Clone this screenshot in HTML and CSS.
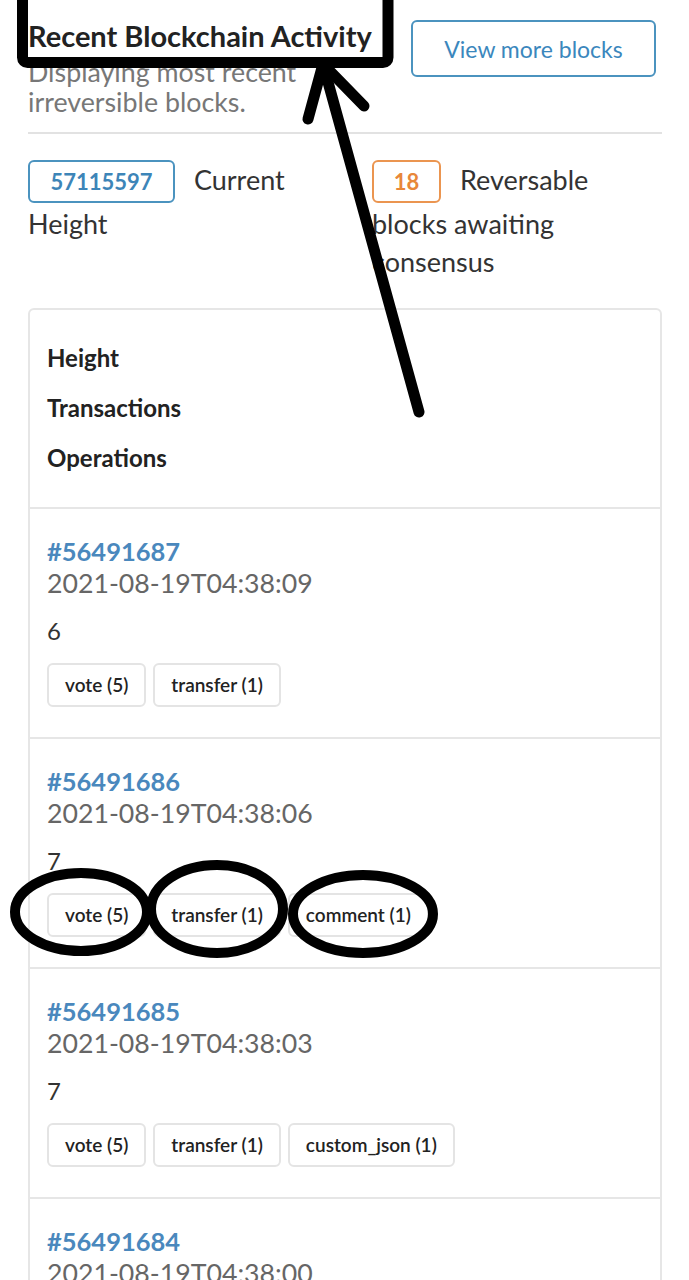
FILE: index.html
```html
<!DOCTYPE html>
<html lang="en">
<head>
<meta charset="utf-8">
<title>Recent Blockchain Activity</title>
<link rel="stylesheet" href="styles.css">
</head>
<body>
<main class="page">
  <header class="head">
    <div class="head-text">
      <h1 class="title">Recent Blockchain Activity</h1>
      <p class="subtitle">Displaying most recent irreversible blocks.</p>
    </div>
    <a class="more-btn" href="#">View more blocks</a>
  </header>
  <hr class="divider">
  <section class="stats">
    <p class="stat"><span class="badge badge-blue">57115597</span> Current Height</p>
    <p class="stat"><span class="badge badge-orange">18</span> Reversable blocks awaiting consensus</p>
  </section>
  <section class="card">
    <div class="card-head">
      <div class="col-label">Height</div>
      <div class="col-label">Transactions</div>
      <div class="col-label">Operations</div>
    </div>
    <div class="row">
      <a class="block-num" href="#">#56491687</a>
      <div class="block-date">2021-08-19T04:38:09</div>
      <div class="tx-count">6</div>
      <div class="tags"><span class="tag">vote (5)</span><span class="tag">transfer (1)</span></div>
    </div>
    <div class="row">
      <a class="block-num" href="#">#56491686</a>
      <div class="block-date">2021-08-19T04:38:06</div>
      <div class="tx-count">7</div>
      <div class="tags"><span class="tag">vote (5)</span><span class="tag">transfer (1)</span><span class="tag">comment (1)</span></div>
    </div>
    <div class="row">
      <a class="block-num" href="#">#56491685</a>
      <div class="block-date">2021-08-19T04:38:03</div>
      <div class="tx-count">7</div>
      <div class="tags"><span class="tag">vote (5)</span><span class="tag">transfer (1)</span><span class="tag">custom_json (1)</span></div>
    </div>
    <div class="row">
      <a class="block-num" href="#">#56491684</a>
      <div class="block-date">2021-08-19T04:38:00</div>
      <div class="tx-count">7</div>
      <div class="tags"><span class="tag">vote (5)</span><span class="tag">transfer (1)</span></div>
    </div>
  </section>
</main>
<svg class="annotations" width="689" height="1280" viewBox="0 0 689 1280" aria-hidden="true">
  <rect x="22.5" y="-20" width="365.5" height="82.5" rx="5" fill="none" stroke="#000" stroke-width="11"/>
  <g stroke="#000" stroke-width="11" stroke-linecap="round" fill="none">
    <line x1="323" y1="64" x2="419" y2="412"/>
    <line x1="323" y1="64" x2="308" y2="119"/>
    <line x1="323" y1="64" x2="364" y2="106"/>
  </g>
  <g stroke="#000" stroke-width="10" fill="none">
    <ellipse cx="81" cy="912" rx="66" ry="39"/>
    <ellipse cx="217" cy="909" rx="66" ry="44"/>
    <ellipse cx="363" cy="914" rx="70" ry="39"/>
  </g>
</svg>
</body>
</html>
```
FILE: styles.css
```css
html, body {
  margin: 0;
  padding: 0;
  background: #fff;
}
body {
  font-family: Lato, "Noto Sans", sans-serif;
  color: #333;
  width: 689px;
  height: 1280px;
  overflow: hidden;
  position: relative;
}
.page {
  margin: 0 27px 0 28px;
}
.head {
  display: flex;
  justify-content: space-between;
  align-items: flex-start;
}
.head-text {
  width: 360px;
}
.title {
  margin: 0;
  padding-top: 19px;
  font-size: 29px;
  line-height: 34px;
  font-weight: 700;
  color: #222;
  white-space: nowrap;
}
.subtitle {
  margin: 4px 0 0;
  font-size: 26.8px;
  line-height: 30px;
  color: #777;
}
.more-btn {
  margin-top: 20px;
  margin-right: 6px;
  width: 245px;
  height: 57px;
  box-sizing: border-box;
  display: flex;
  align-items: center;
  justify-content: center;
  border: 2px solid #4b93bf;
  border-radius: 6px;
  color: #3b87bd;
  font-size: 23px;
  text-decoration: none;
}
.divider {
  margin: 15px 0 0;
  border: 0;
  border-top: 2px solid #e2e2e2;
}
.stats {
  display: grid;
  grid-template-columns: 344px 1fr;
  margin-top: 27px;
}
.stat {
  margin: 0;
  padding-right: 24px;
  font-size: 27px;
  line-height: 38px;
  color: #333;
}
.badge {
  display: inline-block;
  box-sizing: border-box;
  height: 43px;
  line-height: 39px;
  border: 2px solid;
  border-radius: 6px;
  font-size: 22px;
  font-weight: 700;
  text-align: center;
  vertical-align: middle;
  margin-right: 12px;
  position: relative;
  top: -2px;
}
.badge-blue {
  width: 147px;
  color: #3d85b8;
  border-color: #4b93bf;
}
.badge-orange {
  width: 69px;
  color: #e8873a;
  border-color: #eb9550;
}
.card {
  margin-top: 27px;
  border: 2px solid #e6e6e6;
  border-radius: 6px;
}
.card-head {
  padding: 23px 17px 24px;
}
.col-label {
  font-size: 24px;
  line-height: 50px;
  font-weight: 700;
  color: #222;
}
.row {
  border-top: 2px solid #e6e6e6;
  padding: 26px 17px 30px;
}
.block-num {
  display: block;
  font-size: 25.5px;
  line-height: 32px;
  font-weight: 700;
  color: #4a88bd;
  text-decoration: none;
}
.block-date {
  font-size: 26.7px;
  line-height: 32px;
  color: #666;
}
.tx-count {
  margin-top: 16px;
  font-size: 24px;
  line-height: 32px;
  color: #333;
}
.tags {
  margin-top: 16px;
  display: flex;
  gap: 7px;
}
.tag {
  box-sizing: border-box;
  height: 44px;
  display: flex;
  align-items: center;
  padding: 0 16px;
  border: 2px solid #e4e4e4;
  border-radius: 6px;
  font-size: 19px;
  font-weight: 600;
  color: #222;
}
.annotations {
  position: absolute;
  left: 0;
  top: 0;
  pointer-events: none;
}
```
